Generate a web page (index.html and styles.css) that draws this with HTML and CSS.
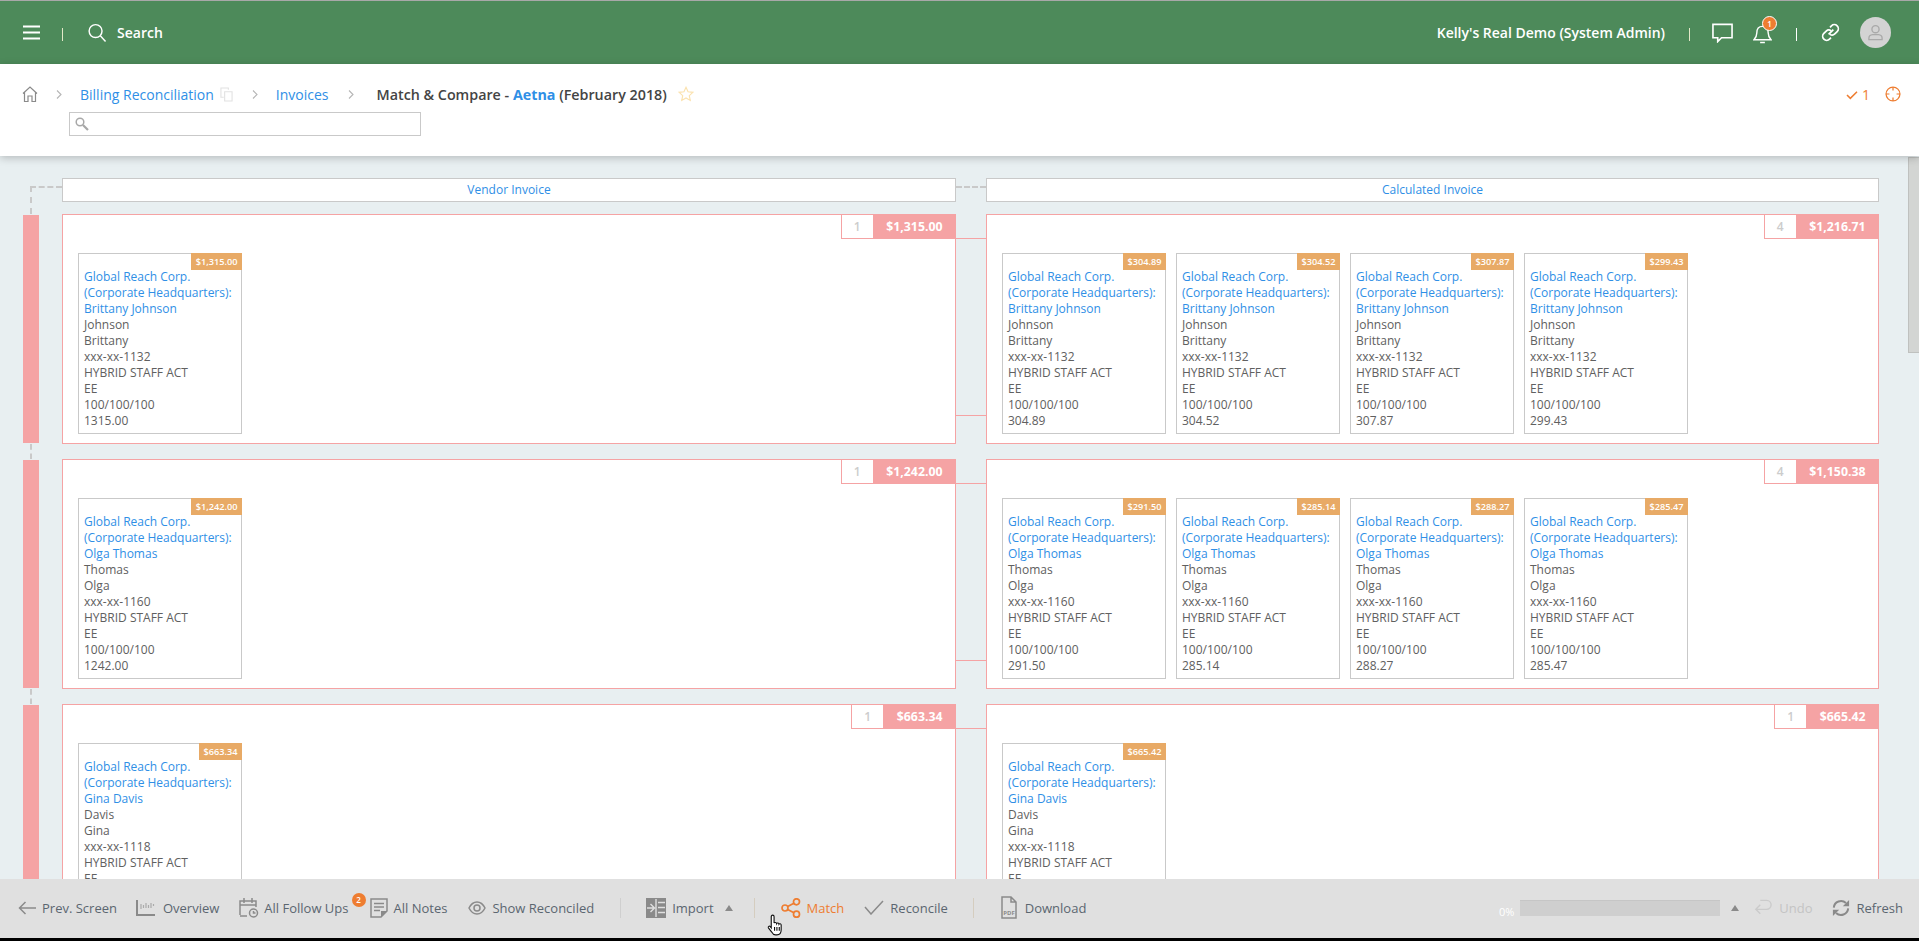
FILE: index.html
```html
<!DOCTYPE html>
<html lang="en">
<head>
<meta charset="utf-8">
<title>Match &amp; Compare</title>
<link rel="stylesheet" href="styles.css">
</head>
<body>
<div class="app">
  <header class="topbar">
    <svg class="ic-menu" viewBox="0 0 17 15"><path d="M0 1.500h17M0 7.500h17M0 13.500h17"/></svg>
    <span class="tsep tsep-a"></span>
    <svg class="ic-search" viewBox="0 0 20 20"><circle cx="8.500" cy="8.500" r="6.800"/><path d="M13.500 13.500L19 19.500"/></svg>
    <span class="search-label">Search</span>
    <span class="spacer"></span>
    <span class="user">Kelly's Real Demo (System Admin)</span>
    <span class="tsep tsep-b"></span>
    <svg class="ic-chat" viewBox="0 0 22 20"><path d="M1 1h20v14H10l-4 4v-4H1z"/></svg>
    <span class="bell">
      <svg class="ic-bell" viewBox="0 0 20 22"><path d="M1 17c2-2 3-3 3-7 0-4 2-7 6-7s6 3 6 7c0 4 1 5 3 7zM7.500 20h5"/></svg>
      <span class="bell-badge">1</span>
    </span>
    <span class="tsep tsep-c"></span>
    <svg class="ic-link" viewBox="0 0 20 20"><path d="M8 12l5-5M9.500 4.500l1.500-1.500a4 4 0 0 1 6 6l-2.500 2.500a4 4 0 0 1-5 .5M10.500 15.500l-1.500 1.500a4 4 0 0 1-6-6l2.500-2.500a4 4 0 0 1 5-.5"/></svg>
    <span class="avatar"><svg viewBox="0 0 18 18"><circle cx="9" cy="5.500" r="3.800"/><path d="M2 16.500v-1.500c0-2 2-3.500 4-3.700h6c2 .2 4 1.700 4 3.700v1.500z"/></svg></span>
  </header>

  <section class="crumbbar">
    <div class="crumbs">
      <svg class="ic-home" viewBox="0 0 16 16"><path d="M1 7.500L8 1l7 6.500M2.500 6.500V15.500H6v-5.500h4v5.500h3.500V6.500"/></svg>
      <svg class="chev ch1" viewBox="0 0 6 9"><path d="M1 .5l4 4-4 4"/></svg>
      <a class="crumb c1">Billing Reconciliation</a>
      <svg class="ic-copy" viewBox="0 0 14 16"><path d="M9 3V1H1v10h3M5 5h8v10H5z"/></svg>
      <svg class="chev ch2" viewBox="0 0 6 9"><path d="M1 .5l4 4-4 4"/></svg>
      <a class="crumb c2">Invoices</a>
      <svg class="chev ch3" viewBox="0 0 6 9"><path d="M1 .5l4 4-4 4"/></svg>
      <span class="title">Match &amp; Compare - <b>Aetna</b> (February 2018)</span>
      <svg class="ic-star" viewBox="0 0 18 18"><path d="M9 1.500l2.300 5 5.400.6-4 3.700 1.100 5.400L9 13.500l-4.800 2.700 1.100-5.400-4-3.700 5.400-.6z"/></svg>
      <span class="spacer"></span>
      <svg class="ic-check" viewBox="0 0 14 12"><path d="M1 6l4 4 8-8"/></svg>
      <span class="count1">1</span>
      <svg class="ic-target" viewBox="0 0 18 18"><circle cx="9" cy="9" r="7.800"/><path d="M9 1v4M9 13v4M1 9h4M13 9h4"/></svg>
    </div>
    <div class="filter">
      <svg viewBox="0 0 14 14"><circle cx="5" cy="5" r="3.800"/><path class="handle" d="M8 8l5 5"/></svg>
    </div>
  </section>

  <main class="content">
    <div class="board">
      <div class="col-heads">
        <div class="head-left">
          <span class="dash-h"></span>
          <div class="col-head">Vendor Invoice</div>
        </div>
        <span class="dash-mid"></span>
        <div class="col-head">Calculated Invoice</div>
      </div>
      <div class="rows" id="rows"></div>
    </div>
    <div class="scrollbar"><span class="thumb"></span></div>
  </main>

  <footer class="toolbar">
    <span class="tool t-prev">
      <svg class="ti" viewBox="0 0 18 14"><path d="M18 7H1.500M7.500 1L1.500 7l6 6"/></svg>Prev. Screen</span>
    <span class="tool t-over">
      <svg class="ti" viewBox="0 0 19 16"><path class="axis" d="M1 0v15h18"/><path class="bars" d="M5 4v5M7.500 5v3M10 3v5M12.500 5v3M15 3v5M17.500 4v2"/></svg>Overview</span>
    <span class="tool t-follow">
      <svg class="ti" viewBox="0 0 20 20"><path d="M1 17V3h16v6M1 7h16M5 0v5M13 0v5M1 18h7"/><circle cx="14.500" cy="15" r="4"/><path d="M14.500 13v2h2"/></svg>All Follow Ups<span class="tbadge">2</span></span>
    <span class="tool t-notes">
      <svg class="ti" viewBox="0 0 18 20"><path d="M1 1h16v12l-6 6H1zM4 5.500h10M4 9h10M4 12.500h6"/><path class="fill-g" d="M11 19v-6h6z"/></svg>All Notes</span>
    <span class="tool t-rec">
      <svg class="ti" viewBox="0 0 18 14"><path d="M1 7c2-4 4.500-6 8-6s6 2 8 6c-2 4-4.500 6-8 6s-6-2-8-6z"/><circle cx="9" cy="7" r="3"/></svg>Show Reconciled</span>
    <span class="bsep s1"></span>
    <span class="tool t-imp">
      <svg class="ti" viewBox="0 0 20 20"><path class="fill-g" d="M0 0h20v20H0z"/><path class="cut" d="M1 10h6.500M4.500 6l4 4-4 4M10 1v18M12 4.500h7M12 9.500h7M12 14.500h7"/></svg>Import<i class="caret"></i></span>
    <span class="bsep s2"></span>
    <span class="tool t-match">
      <svg class="ti" viewBox="0 0 20 20"><circle cx="4" cy="10" r="3"/><circle cx="15.500" cy="3.800" r="3"/><circle cx="15.500" cy="16.200" r="3"/><path d="M6.700 8.500l6.200-3.300M6.700 11.500l6.200 3.300"/></svg>Match</span>
    <span class="tool t-recon">
      <svg class="ti" viewBox="0 0 20 15"><path d="M1 7l6 7L19 1"/></svg>Reconcile</span>
    <span class="bsep s3"></span>
    <span class="tool t-down">
      <svg class="ti" viewBox="0 0 16 23"><path d="M1 1h9l5 5v16H1zM10 1v5h5"/><text class="pdf" x="8" y="18.500">PDF</text></svg>Download</span>
    <span class="spacer"></span>
    <span class="pct">0%</span>
    <span class="progress"></span>
    <i class="caret c-prog"></i>
    <span class="tool t-undo">
      <svg class="ti" viewBox="0 0 20 18"><path d="M7 1h7a5 5 0 0 1 0 10H2M7 6l-5 5 5 5"/></svg>Undo</span>
    <span class="tool t-refresh">
      <svg class="ti" viewBox="0 0 20 20"><path d="M2 9.500a8 8 0 0 1 13.500-5M18 10.500a8 8 0 0 1-13.500 5"/><path class="fill-g" d="M19 1v7h-7zM1 19v-7h7z"/></svg>Refresh</span>
  </footer>
  <div class="screen-edge"></div>
  <svg class="cursor" viewBox="0 0 18 24"><path d="M6 1.500c1 0 1.500.7 1.500 1.700V10c.3-1 2.500-1 2.700.5.400-1 2.400-.8 2.500.6.500-.8 2.300-.6 2.300 1v5c0 3-1.500 5.400-4.500 5.400H9c-2 0-3-1-4-3L1.500 15c-.7-1.200 1-2.500 2-1.300L4.500 15V3.200C4.500 2.200 5 1.500 6 1.500zM8 14v4M10.500 14v4M13 14v4"/></svg>
</div>
<script src="app.js"></script>
</body>
</html>
```

FILE: app.js
```js
const rows = [
  { name: "Brittany Johnson", last: "Johnson", first: "Brittany", ssn: "1132", left: ["1,315.00"], lt: "1,315.00",
    right: ["304.89", "304.52", "307.87", "299.43"], rt: "1,216.71", full: true },
  { name: "Olga Thomas", last: "Thomas", first: "Olga", ssn: "1160", left: ["1,242.00"], lt: "1,242.00",
    right: ["291.50", "285.14", "288.27", "285.47"], rt: "1,150.38", full: true },
  { name: "Gina Davis", last: "Davis", first: "Gina", ssn: "1118", left: ["663.34"], lt: "663.34",
    right: ["665.42"], rt: "665.42", full: false }
];
const card = (r, amt) => `
  <article class="card">
    <span class="tag">$${amt}</span>
    <a class="card-link">Global Reach Corp.<br>(Corporate Headquarters):<br>${r.name}</a>
    <div>${r.last}</div><div>${r.first}</div><div>xxx-xx-${r.ssn}</div>
    <div>HYBRID STAFF ACT</div><div>EE</div>
    ${r.full ? `<div>100/100/100</div><div>${amt.replace(",", "")}</div>` : ""}
  </article>`;
const panel = (r, list, total, cls) => `
  <section class="panel ${cls}">
    <div class="tab"><span class="tab-count">${list.length}</span><span class="tab-amt">$${total}</span></div>
    <div class="cards">${list.map(a => card(r, a)).join("")}</div>
  </section>`;
document.getElementById("rows").innerHTML = rows.map(r => `
  <div class="row">
    <span class="bar"></span>
    ${panel(r, r.left, r.lt, "p-left")}
    <div class="links"><span></span><span></span></div>
    ${panel(r, r.right, r.rt, "p-right")}
  </div>`).join("");
```

FILE: styles.css
```css
* { box-sizing: border-box; }
html, body { margin: 0; height: 100%; overflow: hidden; }
body { font-family: "Open Sans", "Noto Sans", sans-serif; font-size: 12px; color: #606060; background: #e8eff1; }
svg { display: block; flex: none; fill: none; stroke-width: 1.5; }
.app { position: relative; height: 941px; display: flex; flex-direction: column; overflow: hidden; }
.spacer { flex: 1; }

.topbar { height: 64px; flex: none; background: #4d8a5a; border-top: 1px solid #a8a8a8; display: flex; align-items: center; color: #fff; padding: 0 0 0 23px; }
.topbar svg { stroke: #fff; }
.ic-menu { width: 17px; height: 15px; stroke-width: 2; }
.tsep { width: 1px; height: 13px; background: #e3e8c8; margin-top: 3px; }
.tsep-a { margin-left: 22px; }
.ic-search { width: 20px; height: 19px; margin: 0 0 0 24px; }
.search-label { font-size: 14px; font-weight: 600; margin-left: 10px; }
.user { font-size: 14px; font-weight: 600; }
.tsep-b { margin-left: 24px; }
.ic-chat { width: 21px; height: 20px; margin-left: 22px; stroke-width: 1.7; }
.bell { position: relative; margin-left: 20px; }
.ic-bell { width: 19px; height: 22px; margin-top: 3px; }
.bell-badge { position: absolute; left: 9px; top: -4px; width: 15px; height: 15px; border-radius: 50%; background: #ee7d31; border: 1px solid #fff; font-size: 8px; line-height: 13px; text-align: center; font-weight: 600; }
.tsep-c { margin-left: 24px; background: #fff; }
.ic-link { width: 19px; height: 19px; margin-left: 24px; stroke-width: 1.8; }
.avatar { width: 31px; height: 31px; border-radius: 50%; background: #d3d3d3; margin: 0 28px 0 20px; display: flex; align-items: center; justify-content: center; }
.topbar .avatar svg { width: 17px; height: 17px; stroke: #a9a9a9; stroke-width: 1.4; }

.crumbbar { height: 92px; flex: none; background: #fff; box-shadow: 0 2px 8px rgba(0,0,0,.22); position: relative; z-index: 2; padding: 20px 18px 0 22px; }
.crumbs { display: flex; align-items: center; height: 20px; font-size: 14px; }
.ic-home { width: 16px; height: 16px; stroke: #8a8a8a; stroke-width: 1.2; }
.chev { width: 6px; height: 9px; stroke: #b5b5b5; stroke-width: 1.1; }
.ch1 { margin-left: 18px; }
.crumb { color: #2f8fe6; }
.c1 { margin-left: 18px; }
.ic-copy { width: 13px; height: 15px; stroke: #e2e2e2; margin-left: 6px; stroke-width: 1.2; }
.ch2 { margin-left: 19px; }
.c2 { margin-left: 18px; }
.ch3 { margin-left: 19px; margin-right: 23px; }
.title { font-weight: 600; color: #444; font-size: 14.300px; }
.title b { font-weight: 700; color: #2f8fe6; }
.ic-star { width: 16px; height: 16px; stroke: #fbe2ae; margin-left: 11px; stroke-width: 1.3; }
.ic-check { width: 12px; height: 10px; stroke: #ee7d31; margin-top: 1px; stroke-width: 1.8; }
.count1 { color: #ee7d31; font-size: 14px; margin: 0 0 0 4px; width: 23px; }
.ic-target { width: 16px; height: 16px; stroke: #ee7d31; stroke-width: 1.4; }
.filter { width: 352px; height: 24px; margin: 8px 0 0 47px; border: 1px solid #c9c9c9; padding: 4px 0 0 5px; }
.filter svg { width: 14px; height: 14px; stroke: #a8a8a8; }
.filter .handle { stroke-width: 2.2; }

.content { flex: 1; min-height: 0; position: relative; overflow: hidden; padding: 22px 40px 0 23px; background: #e8eff1; }
.board { display: flex; flex-direction: column; }
.col-heads { display: flex; height: 24px; }
.head-left { width: 933px; display: flex; position: relative; }
.head-left .col-head { margin-left: 39px; }
.dash-h { position: absolute; left: 7px; top: 8px; width: 32px; height: 28px; border-top: 2px dashed #c9c9c9; border-left: 2px dashed #c9c9c9; }
.dash-mid { width: 30px; height: 12px; border-bottom: 2px dashed #c9c9c9; margin-top: -2px; }
.col-head { flex: 1; height: 24px; background: #fff; border: 1px solid #c9c9c9; color: #2f8fe6; font-size: 12px; text-align: center; line-height: 22px; }
.rows { margin-top: 12px; display: flex; flex-direction: column; gap: 15px; }
.row { display: flex; height: 230px; position: relative; }
.row + .row::before { content: ""; position: absolute; left: 7px; top: -15px; height: 15px; border-left: 2px dashed #c9c9c9; }
.bar { width: 16px; background: #f5a3a4; margin: 1px 23px 1px 0; flex: none; }
.panel { position: relative; background: #fff; border: 1px solid #f5a3a4; }
.p-left { width: 894px; }
.p-right { width: 893px; }
.links { width: 30px; position: relative; }
.links span { position: absolute; left: 0; right: 0; height: 1px; background: #f5a3a4; }
.links span:first-child { top: 24px; }
.links span:last-child { top: 201px; }
.tab { position: absolute; right: -1px; top: -1px; height: 25px; display: flex; }
.tab-count { width: 32px; border: 1px solid #f5a3a4; border-right: 0; background: #fff; color: #ccc; font-weight: 600; text-align: center; line-height: 23px; font-size: 12px; }
.tab-amt { padding: 0 13.500px; background: #f5a3a4; color: #fff; font-weight: 700; font-size: 12.300px; line-height: 25px; }
.cards { display: flex; gap: 10px; padding: 38px 0 0 15px; }
.card { position: relative; width: 164px; height: 181px; border: 1px solid #c9c9c9; background: #fff; padding: 15px 0 0 5px; line-height: 16px; font-size: 12px; color: #606060; }
.card-link { color: #2f8fe6; display: block; }
.tag { position: absolute; right: -1px; top: -1px; height: 17px; padding: 0 4.500px; background: #e8aa66; color: #fff; font-size: 9.200px; font-weight: 600; line-height: 17px; }

.scrollbar { position: absolute; right: 0; top: 0; bottom: 0; width: 11px; background: #e8eff1; }
.thumb { display: block; height: 196px; background: #d3d5d3; margin-top: 1px; border: 1px solid #bfc1bf; border-right: 0; }

.toolbar { height: 59px; flex: none; background: #e0e0e0; display: flex; align-items: center; position: relative; z-index: 3; font-size: 13px; color: #5b6670; padding: 0 16px 2px 18px; }
.toolbar svg { stroke: #8a8a8a; }
.tool { display: flex; align-items: center; position: relative; }
.fill-g { fill: #8a8a8a; stroke: none; }
.t-prev .ti { width: 18px; height: 14px; margin-right: 6px; }
.t-over { margin-left: 19px; }
.t-over .ti { width: 19px; height: 16px; margin-right: 8px; }
.toolbar .axis { stroke-width: 2; }
.toolbar .bars { stroke: #aaa; stroke-width: 1.2; }
.t-follow { margin-left: 20px; }
.t-follow .ti { width: 20px; height: 20px; margin-right: 5px; }
.tbadge { position: absolute; right: -17px; top: -5px; width: 14px; height: 14px; border-radius: 50%; background: #ee7d31; color: #fff; font-size: 8px; line-height: 14px; text-align: center; font-weight: 600; }
.t-notes { margin-left: 21px; }
.t-notes .ti { width: 18px; height: 20px; margin-right: 6px; }
.t-rec { margin-left: 21px; }
.t-rec .ti { width: 18px; height: 14px; margin-right: 6px; }
.bsep { width: 1px; height: 20px; background: #cfcfcf; }
.s1 { margin-left: 26px; }
.t-imp { margin-left: 25px; }
.toolbar .t-imp .ti { width: 20px; height: 20px; margin-right: 6px; stroke: none; }
.toolbar .cut { stroke: #e0e0e0; stroke-width: 1.4; }
.caret { width: 0; height: 0; border-left: 4px solid transparent; border-right: 4px solid transparent; border-bottom: 6px solid #8a8a8a; margin-left: 11px; }
.s2 { margin-left: 21px; background: #d5cdbf; }
.t-match { margin-left: 26px; color: #ee7d31; }
.toolbar .t-match .ti { width: 20px; height: 20px; margin-right: 6px; stroke: #ee7d31; stroke-width: 1.7; }
.t-recon { margin-left: 20px; }
.t-recon .ti { width: 20px; height: 15px; margin-right: 6px; }
.s3 { margin-left: 25px; background: #d5cdbf; }
.t-down { margin-left: 27px; }
.toolbar .t-down .ti { width: 16px; height: 23px; margin-right: 8px; }
.pdf { font-size: 6px; fill: #8a8a8a; text-anchor: middle; font-weight: 700; stroke: none; }
.pct { color: #fff; font-size: 11px; margin: 8px 6px 0 0; }
.progress { width: 200px; height: 16px; background: #cfcfcf; border-top: 1px solid #c6c6c6; }
.c-prog { margin-left: 11px; }
.t-undo { margin-left: 15px; color: #c4c4c4; }
.toolbar .t-undo .ti { width: 18px; height: 17px; margin-right: 7px; stroke: #cbcbcb; }
.t-refresh { margin-left: 19px; }
.toolbar .t-refresh .ti { width: 18px; height: 18px; margin-right: 7px; stroke-width: 2.2; }
.screen-edge { height: 3px; flex: none; background: #000; position: relative; z-index: 3; }
.cursor { position: absolute; left: 767px; top: 913px; width: 17px; height: 24px; z-index: 5; fill: #fff; stroke: #111; stroke-width: 1.2; }
```
